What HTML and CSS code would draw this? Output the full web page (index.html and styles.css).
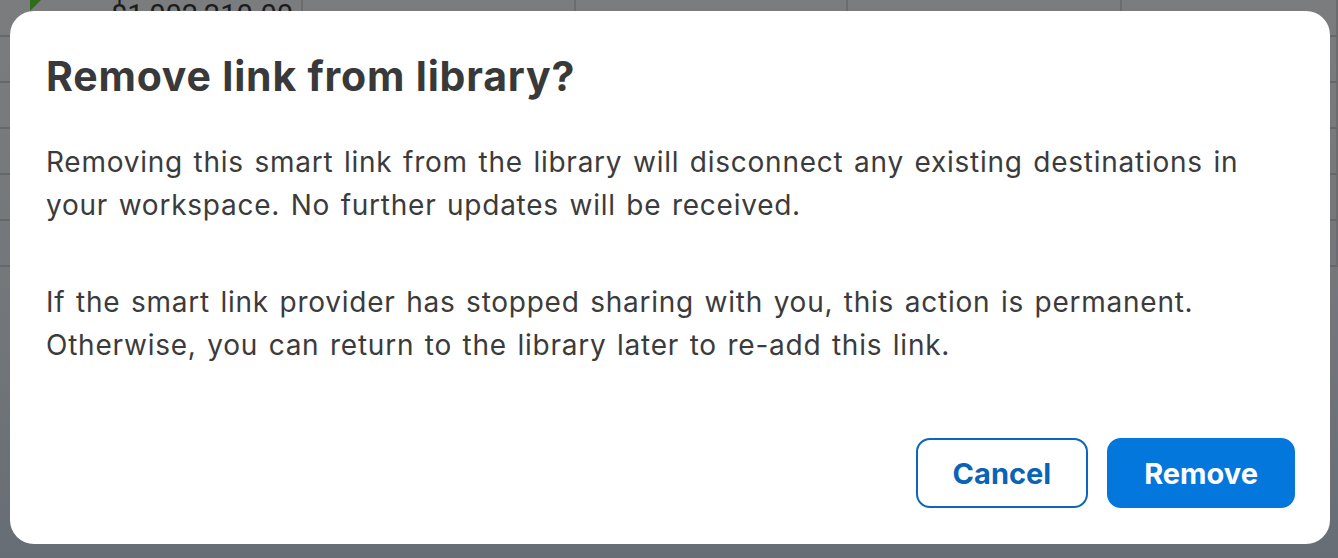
FILE: index.html
```html
<!DOCTYPE html>
<html lang="en">
<head>
  <meta charset="UTF-8" />
  <meta name="viewport" content="width=device-width, initial-scale=1.0"/>
  <title>Remove link from library?</title>
  <link rel="stylesheet" href="styles.css">
</head>
<body>

  <!-- spreadsheet behind the dim overlay -->
  <div class="sheet">
    <div class="cell head"></div>
    <div class="cell amount flagged">$1,002,210.00</div>
    <div class="cell"></div>
    <div class="cell"></div>
    <div class="cell"></div>
    <div class="cell"></div>

    <div class="cell head"></div>
    <div class="cell"></div>
    <div class="cell"></div>
    <div class="cell"></div>
    <div class="cell"></div>
    <div class="cell"></div>

    <div class="cell head"></div>
    <div class="cell"></div>
    <div class="cell"></div>
    <div class="cell"></div>
    <div class="cell"></div>
    <div class="cell"></div>

    <div class="cell head"></div>
    <div class="cell"></div>
    <div class="cell"></div>
    <div class="cell"></div>
    <div class="cell"></div>
    <div class="cell"></div>

    <div class="cell head"></div>
    <div class="cell"></div>
    <div class="cell"></div>
    <div class="cell"></div>
    <div class="cell"></div>
    <div class="cell"></div>

    <div class="cell head"></div>
    <div class="cell"></div>
    <div class="cell"></div>
    <div class="cell"></div>
    <div class="cell"></div>
    <div class="cell"></div>
  </div>

  <div class="backdrop">
    <div class="dialog" role="dialog" aria-labelledby="dialogTitle">
      <h2 id="dialogTitle" class="dialog-title">Remove link from library?</h2>

      <p class="dialog-text">Removing this smart link from the library will disconnect any existing destinations in your workspace. No further updates will be received.</p>
      <p class="dialog-text">If the smart link provider has stopped sharing with you, this action is permanent. Otherwise, you can return to the library later to re-add this link.</p>

      <div class="dialog-actions">
        <button class="btn btn-outline">Cancel</button>
        <button class="btn btn-primary">Remove</button>
      </div>
    </div>
  </div>

</body>
</html>
```

FILE: styles.css
```css
* {
  margin: 0;
  padding: 0;
  box-sizing: border-box;
}

body {
  font-family: Inter, 'Open Sans', 'Liberation Sans', sans-serif;
  height: 100vh;
  overflow: hidden;
  background: linear-gradient(180deg, #7b7c7e 0%, #72767a 60%, #676d75 100%);
  position: relative;
}

/* sheet underneath */
.sheet {
  display: grid;
  grid-template-columns: 30px 273px 273px 272px 274px 1fr;
  grid-auto-rows: 46px;
  margin-top: -9px;
}

.cell {
  border-right: 2px solid #6b6c6e;
  border-bottom: 2px solid #65676a;
  position: relative;
}

.cell.head {
  border-right: none;
}

.amount {
  font-family: Roboto, 'Liberation Sans', sans-serif;
  font-size: 29px;
  color: #1c1c1c;
  text-align: right;
  padding: 7px 8px 0 0;
}

.flagged::before {
  content: '';
  position: absolute;
  top: 0;
  left: 0;
  border-top: 20px solid #2f6c1c;
  border-right: 20px solid transparent;
}

/* modal */
.backdrop {
  position: fixed;
  inset: 0;
  display: flex;
  padding: 11px 8px 14px 10px;
}

.dialog {
  flex: 1;
  display: flex;
  flex-direction: column;
  background: #fff;
  border-radius: 24px;
  padding: 41px 35px 36px 36px;
}

.dialog-title {
  font-size: 41px;
  line-height: 48px;
  font-weight: 700;
  letter-spacing: 0.8px;
  color: #393939;
  margin-bottom: 41px;
}

.dialog-text {
  font-size: 28px;
  line-height: 43px;
  letter-spacing: 0.75px;
  word-spacing: 2px;
  color: #3b3b3b;
}

.dialog-text + .dialog-text {
  margin-top: 54px;
}

.dialog-actions {
  margin-top: auto;
  display: flex;
  justify-content: flex-end;
  gap: 19px;
}

.btn {
  font-family: inherit;
  font-size: 29px;
  font-weight: 700;
  height: 70px;
  padding: 0 35px;
  border-radius: 14px;
  border: 2px solid #0b66bd;
  cursor: pointer;
}

.btn-outline {
  background: #fff;
  color: #0a63b6;
}

.btn-primary {
  background: #0377db;
  border-color: #0377db;
  color: #fff;
}
```
